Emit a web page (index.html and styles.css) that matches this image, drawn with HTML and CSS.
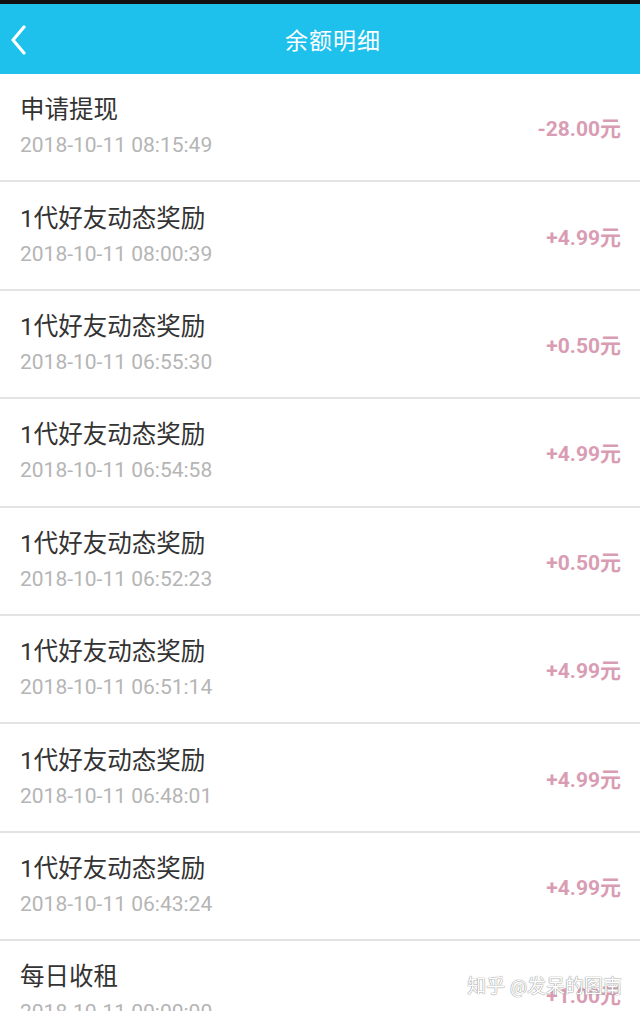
FILE: index.html
```html
<!DOCTYPE html>
<html>
<head>
  <meta charset="utf-8">
  <title>余额明细</title>
  <link rel="stylesheet" href="styles.css">
</head>
<body>
  <div class="statusbar"></div>
  <div class="header">
    <div class="back">
      <svg width="16" height="30" viewBox="0 0 16 30">
        <path d="M14 2 L3 15 L14 28" fill="none" stroke="#ffffff" stroke-width="3.2" stroke-linecap="round" stroke-linejoin="round"/>
      </svg>
    </div>
    <div class="title">余额明细</div>
  </div>

  <!-- balance records -->
  <div class="list">
    <div class="row">
      <div class="info">
        <div class="name">申请提现</div>
        <div class="time">2018-10-11 08:15:49</div>
      </div>
      <div class="amount">-28.00元</div>
    </div>
    <div class="row">
      <div class="info">
        <div class="name">1代好友动态奖励</div>
        <div class="time">2018-10-11 08:00:39</div>
      </div>
      <div class="amount">+4.99元</div>
    </div>
    <div class="row">
      <div class="info">
        <div class="name">1代好友动态奖励</div>
        <div class="time">2018-10-11 06:55:30</div>
      </div>
      <div class="amount">+0.50元</div>
    </div>
    <div class="row">
      <div class="info">
        <div class="name">1代好友动态奖励</div>
        <div class="time">2018-10-11 06:54:58</div>
      </div>
      <div class="amount">+4.99元</div>
    </div>
    <div class="row">
      <div class="info">
        <div class="name">1代好友动态奖励</div>
        <div class="time">2018-10-11 06:52:23</div>
      </div>
      <div class="amount">+0.50元</div>
    </div>
    <div class="row">
      <div class="info">
        <div class="name">1代好友动态奖励</div>
        <div class="time">2018-10-11 06:51:14</div>
      </div>
      <div class="amount">+4.99元</div>
    </div>
    <div class="row">
      <div class="info">
        <div class="name">1代好友动态奖励</div>
        <div class="time">2018-10-11 06:48:01</div>
      </div>
      <div class="amount">+4.99元</div>
    </div>
    <div class="row">
      <div class="info">
        <div class="name">1代好友动态奖励</div>
        <div class="time">2018-10-11 06:43:24</div>
      </div>
      <div class="amount">+4.99元</div>
    </div>
    <div class="row">
      <div class="info">
        <div class="name">每日收租</div>
        <div class="time">2018-10-11 00:00:00</div>
      </div>
      <div class="amount">+1.00元</div>
    </div>
  </div>

  <div class="watermark">知乎 @发呆的图南</div>
</body>
</html>
```

FILE: styles.css
```css
html, body {
  margin: 0;
  height: 100%;
  overflow: hidden;
}
body {
  position: relative;
  background-color: #ffffff;
  font-family: Roboto, "Noto Sans CJK SC", sans-serif;
}
.statusbar {
  height: 4px;
  background-color: #111111;
}
.header {
  display: flex;
  align-items: center;
  height: 70px;
  background-color: #1ec0ec;
  color: #ffffff;
}
.back {
  display: flex;
  align-items: center;
  width: 16px;
  padding-left: 10px;
  margin-top: 2px;
}
.title {
  flex: 1;
  text-align: center;
  font-size: 23px;
  letter-spacing: 1px;
}
.row {
  display: flex;
  align-items: center;
  justify-content: space-between;
  box-sizing: border-box;
  height: 108.4px;
  padding: 0 19px 2px 20px;
  border-bottom: 2px solid #e3e3e3;
}
.name {
  font-size: 24.5px;
  line-height: 32px;
  color: #333333;
}
.time {
  margin-top: 6px;
  font-size: 21px;
  line-height: 26px;
  color: #b5b5b5;
}
.amount {
  margin-top: 2px;
  font-size: 21px;
  font-weight: bold;
  color: #d99db3;
}
.watermark {
  position: absolute;
  right: 18px;
  bottom: 13px;
  font-size: 19px;
  color: #ffffff;
  text-shadow: 0 0 1px #888888, 0 0 1px #888888;
}
```
